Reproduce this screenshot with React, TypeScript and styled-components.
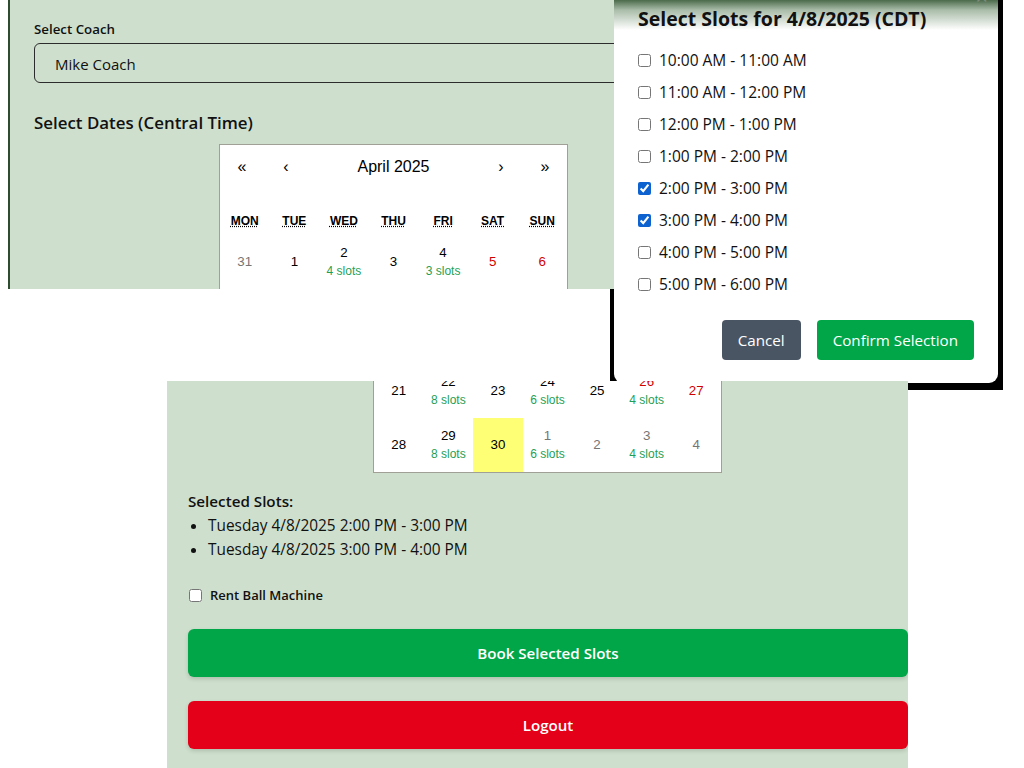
import React from "react";
import styled, { createGlobalStyle } from "styled-components";

const Global = createGlobalStyle`
  html, body { margin: 0; padding: 0; background: #ffffff; }
  body { font-family: "Open Sans", "Noto Sans", sans-serif; color: #111; }
  * { box-sizing: border-box; }
`;

const Page = styled.div`
  position: relative;
  width: 1024px;
  height: 768px;
  overflow: hidden;
  display: flex;
  flex-direction: column;
  background: #ffffff;
`;

const TopPanel = styled.section`
  position: relative;
  z-index: 2;
  margin-left: 8px;
  width: 606px;
  height: 289px;
  flex: none;
  overflow: hidden;
  background: #cee0cd;
  border-left: 2px solid #2f4c30;
  padding: 20px 0 0 24px;
  display: flex;
  flex-direction: column;
`;

const FieldLabel = styled.label`
  font-size: 13.3px;
  font-weight: 600;
  line-height: 18px;
  margin-bottom: 5px;
  color: #111;
`;

const SelectBox = styled.div`
  width: 620px;
  height: 40px;
  flex: none;
  border: 1px solid #2c2c2c;
  border-radius: 6px;
  display: flex;
  align-items: center;
  padding: 1px 0 0 20px;
  font-size: 15px;
  color: #111;
`;

const SectionTitle = styled.h2`
  margin: 28px 0 9px;
  font-size: 16.9px;
  font-weight: 600;
  line-height: 24px;
  color: #111;
`;

const CalendarBox = styled.div<{ $offset: number }>`
  margin-left: ${(p) => p.$offset}px;
  width: 349px;
  flex: none;
  background: #ffffff;
  border: 1px solid #a0a096;
  font-family: "Liberation Sans", Arial, sans-serif;
`;

const CalendarTail = styled(CalendarBox)`
  border-top: none;
  height: 92px;
  overflow: hidden;
  display: flex;
  flex-direction: column;
  justify-content: flex-end;
`;

const Nav = styled.div`
  display: flex;
  height: 44px;
  margin-bottom: 16px;
`;

const NavButton = styled.button<{ $grow?: boolean }>`
  min-width: 44px;
  flex: ${(p) => (p.$grow ? "1" : "none")};
  border: none;
  background: none;
  font-family: inherit;
  font-size: 16px;
  color: #000;
  padding: 0;
`;

const WeekRow = styled.div`
  display: grid;
  grid-template-columns: repeat(7, 1fr);
  height: 30px;
  align-items: center;
  text-align: center;
`;

const WeekDay = styled.abbr`
  font-size: 12px;
  font-weight: bold;
  text-decoration: underline dotted;
  text-underline-offset: 1px;
  color: #000;
`;

const TileRow = styled.div`
  display: grid;
  grid-template-columns: repeat(7, 1fr);
  flex: none;
`;

type Tone = "normal" | "weekend" | "other";

const Tile = styled.div<{ $active?: boolean }>`
  height: 54px;
  display: flex;
  flex-direction: column;
  align-items: center;
  justify-content: center;
  background: ${(p) => (p.$active ? "#ffff76" : "transparent")};
`;

const DayNum = styled.span<{ $tone: Tone }>`
  font-size: 13.33px;
  line-height: 18px;
  color: ${(p) =>
    p.$tone === "weekend" ? "#d10000" : p.$tone === "other" ? "#757575" : "#000"};
`;

const Slots = styled.span`
  font-size: 12px;
  line-height: 18px;
  color: #1f9f55;
`;

const BottomPanel = styled.section`
  position: relative;
  z-index: 2;
  margin: 92px 0 0 167px;
  width: 741px;
  height: 387px;
  flex: none;
  overflow: hidden;
  background: #cee0cd;
  padding-left: 21px;
  display: flex;
  flex-direction: column;
`;

const SelectedTitle = styled.div`
  margin-top: 17px;
  font-size: 15.2px;
  font-weight: 600;
  line-height: 22px;
`;

const SlotList = styled.ul`
  margin: 2px 0 0;
  padding-left: 20px;
  font-size: 15.4px;
  line-height: 24px;
`;

const CheckRow = styled.label`
  margin-top: 23px;
  display: flex;
  align-items: center;
  height: 20px;
  font-size: 13px;
  font-weight: 600;
  input { margin: 0 8px 0 1px; width: 13px; height: 13px; }
`;

const WideButton = styled.button<{ $color: string }>`
  margin-top: 24px;
  width: 100%;
  height: 48px;
  flex: none;
  border: none;
  border-radius: 6px;
  background: ${(p) => p.$color};
  color: #fff;
  font-family: inherit;
  font-size: 15.1px;
  font-weight: 600;
  box-shadow: 0 2px 4px rgba(0, 0, 0, 0.15);
`;

const Backdrop = styled.div`
  position: absolute;
  z-index: 1;
  left: 610px;
  top: 0;
  width: 393px;
  height: 390px;
  background: #000;
  padding-left: 4px;
`;

const Modal = styled.div`
  position: relative;
  width: 384px;
  height: 383px;
  border-radius: 0 0 9px 9px;
  background: linear-gradient(to bottom, #4b6a4b 0px, #a9bca9 10px, #ffffff 30px);
  padding: 6px 24px 0 24px;
  display: flex;
  flex-direction: column;
`;

const CloseMark = styled.span`
  position: absolute;
  top: -14px;
  right: 10px;
  font-size: 22px;
  color: #7d8a7d;
  line-height: 20px;
`;

const ModalTitle = styled.h3`
  margin: 0 0 12px;
  font-size: 19.5px;
  font-weight: 700;
  line-height: 26px;
  color: #111;
`;

const SlotOption = styled.label`
  display: flex;
  align-items: center;
  height: 32px;
  font-size: 15.5px;
  color: #111;
  input { margin: 0 8px 0 0; width: 13px; height: 13px; accent-color: #0d62d0; }
`;

const Actions = styled.div`
  margin-top: 20px;
  display: flex;
  justify-content: flex-end;
  gap: 16px;
`;

const ActionButton = styled.button<{ $color: string }>`
  height: 40px;
  padding: 0 16px;
  border: none;
  border-radius: 4px;
  background: ${(p) => p.$color};
  color: #fff;
  font-family: inherit;
  font-size: 15.2px;
`;

type Day = { n: number; tone: Tone; slots?: number; active?: boolean };

const weekdays = [
  ["MON", "Monday"],
  ["TUE", "Tuesday"],
  ["WED", "Wednesday"],
  ["THU", "Thursday"],
  ["FRI", "Friday"],
  ["SAT", "Saturday"],
  ["SUN", "Sunday"],
];

const rowsTop: Day[][] = [
  [
    { n: 31, tone: "other" },
    { n: 1, tone: "normal" },
    { n: 2, tone: "normal", slots: 4 },
    { n: 3, tone: "normal" },
    { n: 4, tone: "normal", slots: 3 },
    { n: 5, tone: "weekend" },
    { n: 6, tone: "weekend" },
  ],
];

const rowsBottom: Day[][] = [
  [
    { n: 21, tone: "normal" },
    { n: 22, tone: "normal", slots: 8 },
    { n: 23, tone: "normal" },
    { n: 24, tone: "normal", slots: 6 },
    { n: 25, tone: "normal" },
    { n: 26, tone: "weekend", slots: 4 },
    { n: 27, tone: "weekend" },
  ],
  [
    { n: 28, tone: "normal" },
    { n: 29, tone: "normal", slots: 8 },
    { n: 30, tone: "normal", active: true },
    { n: 1, tone: "other", slots: 6 },
    { n: 2, tone: "other" },
    { n: 3, tone: "other", slots: 4 },
    { n: 4, tone: "other" },
  ],
];

const slotTimes = [
  "10:00 AM - 11:00 AM",
  "11:00 AM - 12:00 PM",
  "12:00 PM - 1:00 PM",
  "1:00 PM - 2:00 PM",
  "2:00 PM - 3:00 PM",
  "3:00 PM - 4:00 PM",
  "4:00 PM - 5:00 PM",
  "5:00 PM - 6:00 PM",
];
const checked = new Set(["2:00 PM - 3:00 PM", "3:00 PM - 4:00 PM"]);

function Rows({ rows }: { rows: Day[][] }) {
  return (
    <>
      {rows.map((row, i) => (
        <TileRow key={i}>
          {row.map((d, j) => (
            <Tile key={j} $active={d.active}>
              <DayNum $tone={d.tone}>{d.n}</DayNum>
              {d.slots ? <Slots>{d.slots} slots</Slots> : null}
            </Tile>
          ))}
        </TileRow>
      ))}
    </>
  );
}

export default function App() {
  return (
    <Page>
      <Global />
      <TopPanel>
        <FieldLabel>Select Coach</FieldLabel>
        <SelectBox>Mike Coach</SelectBox>
        <SectionTitle>Select Dates (Central Time)</SectionTitle>
        <CalendarBox $offset={185}>
          <Nav>
            <NavButton>«</NavButton>
            <NavButton>‹</NavButton>
            <NavButton $grow>April 2025</NavButton>
            <NavButton>›</NavButton>
            <NavButton>»</NavButton>
          </Nav>
          <WeekRow>
            {weekdays.map(([s, l]) => (
              <div key={s}>
                <WeekDay title={l}>{s}</WeekDay>
              </div>
            ))}
          </WeekRow>
          <Rows rows={rowsTop} />
        </CalendarBox>
      </TopPanel>

      <BottomPanel>
        <CalendarTail $offset={185}>
          <Rows rows={rowsBottom} />
        </CalendarTail>
        <SelectedTitle>Selected Slots:</SelectedTitle>
        <SlotList>
          <li>Tuesday 4/8/2025 2:00 PM - 3:00 PM</li>
          <li>Tuesday 4/8/2025 3:00 PM - 4:00 PM</li>
        </SlotList>
        <CheckRow>
          <input type="checkbox" />
          Rent Ball Machine
        </CheckRow>
        <WideButton $color="#00a648">Book Selected Slots</WideButton>
        <WideButton $color="#e50019">Logout</WideButton>
      </BottomPanel>

      <Backdrop>
        <Modal>
          <CloseMark>×</CloseMark>
          <ModalTitle>Select Slots for 4/8/2025 (CDT)</ModalTitle>
          {slotTimes.map((t) => (
            <SlotOption key={t}>
              <input type="checkbox" defaultChecked={checked.has(t)} />
              {t}
            </SlotOption>
          ))}
          <Actions>
            <ActionButton $color="#4a5563">Cancel</ActionButton>
            <ActionButton $color="#00a648">Confirm Selection</ActionButton>
          </Actions>
        </Modal>
      </Backdrop>
    </Page>
  );
}
